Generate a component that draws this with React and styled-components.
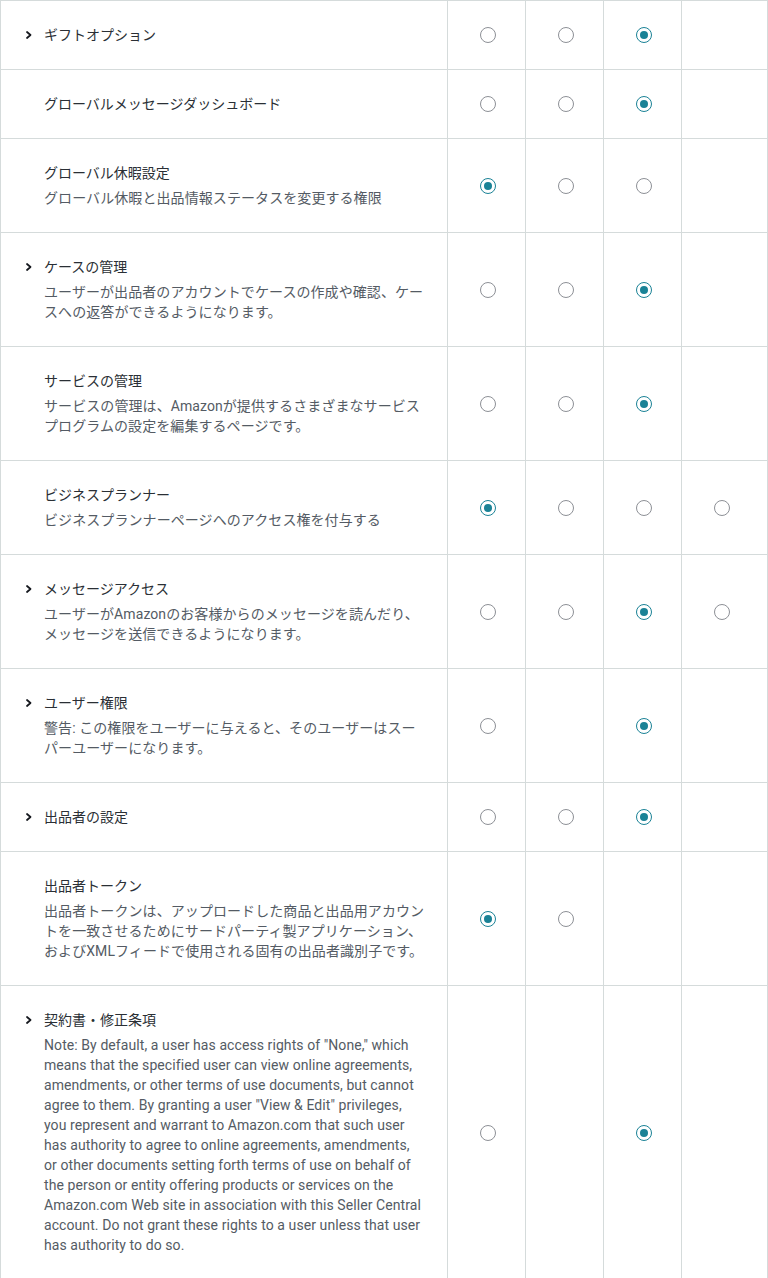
import React from 'react';
import styled, { createGlobalStyle } from 'styled-components';

const GlobalStyle = createGlobalStyle`
  html, body {
    margin: 0;
    padding: 0;
    background: #fff;
  }
  body {
    font-family: Roboto, "Noto Sans CJK JP", sans-serif;
    -webkit-font-smoothing: antialiased;
  }
`;

const Table = styled.div`
  width: 768px;
  box-sizing: border-box;
  border-top: 1px solid #d5dbdb;
  border-left: 1px solid #d5dbdb;
`;

const Row = styled.div`
  display: grid;
  grid-template-columns: 447px 78px 78px 78px 86px;
  border-bottom: 1px solid #d5dbdb;
`;

const LabelCell = styled.div`
  display: flex;
  align-items: flex-start;
  box-sizing: border-box;
  padding: 24px 22px 24px 24px;
  border-right: 1px solid #d5dbdb;
`;

const ChevronSlot = styled.div`
  flex: 0 0 19px;
  height: 20px;
  display: flex;
  align-items: center;
`;

const TextBlock = styled.div`
  flex: 1;
  min-width: 0;
`;

const Title = styled.div`
  font-size: 14px;
  line-height: 20px;
  color: #2a2f35;
`;

const Desc = styled.div`
  margin-top: 5px;
  font-size: 14px;
  line-height: 20px;
  letter-spacing: 0.08px;
  color: #545b64;
  line-break: loose;
`;

const RadioCell = styled.div`
  display: flex;
  align-items: center;
  box-sizing: border-box;
  padding-left: 32px;
  border-right: 1px solid #d5dbdb;
`;

const Radio = styled.span`
  position: relative;
  display: block;
  width: 16px;
  height: 16px;
  box-sizing: border-box;
  border-radius: 50%;
  border: ${p => (p.$checked ? '1.5px solid #1a8296' : '1px solid #8d9096')};
  background: #fff;

  &::after {
    content: '';
    display: ${p => (p.$checked ? 'block' : 'none')};
    position: absolute;
    left: 50%;
    top: 50%;
    width: 8px;
    height: 8px;
    margin: -4px 0 0 -4px;
    border-radius: 50%;
    background: #1a8296;
  }
`;

function Chevron() {
  return (
    <svg width="8" height="10" viewBox="0 0 8 10">
      <path d="M2 2 L5.5 5 L2 8" fill="none" stroke="#16191f" strokeWidth="1.8" strokeLinecap="round" strokeLinejoin="round" />
    </svg>
  );
}

// o = 未選択, x = 選択, - = なし
const rows = [
  { title: 'ギフトオプション', chevron: true, radios: 'oox-' },
  { title: 'グローバルメッセージダッシュボード', radios: 'oox-' },
  { title: 'グローバル休暇設定', desc: 'グローバル休暇と出品情報ステータスを変更する権限', radios: 'xoo-' },
  { title: 'ケースの管理', chevron: true, desc: 'ユーザーが出品者のアカウントでケースの作成や確認、ケースへの返答ができるようになります。', radios: 'oox-' },
  { title: 'サービスの管理', desc: 'サービスの管理は、Amazonが提供するさまざまなサービスプログラムの設定を編集するページです。', radios: 'oox-' },
  { title: 'ビジネスプランナー', desc: 'ビジネスプランナーページへのアクセス権を付与する', radios: 'xooo' },
  { title: 'メッセージアクセス', chevron: true, desc: 'ユーザーがAmazonのお客様からのメッセージを読んだり、メッセージを送信できるようになります。', radios: 'ooxo' },
  { title: 'ユーザー権限', chevron: true, desc: '警告: この権限をユーザーに与えると、そのユーザーはスーパーユーザーになります。', radios: 'o-x-' },
  { title: '出品者の設定', chevron: true, radios: 'oox-' },
  { title: '出品者トークン', desc: '出品者トークンは、アップロードした商品と出品用アカウントを一致させるためにサードパーティ製アプリケーション、およびXMLフィードで使用される固有の出品者識別子です。', radios: 'xo--' },
  {
    title: '契約書・修正条項',
    chevron: true,
    desc: 'Note: By default, a user has access rights of "None," which means that the specified user can view online agreements, amendments, or other terms of use documents, but cannot agree to them. By granting a user "View & Edit" privileges, you represent and warrant to Amazon.com that such user has authority to agree to online agreements, amendments, or other documents setting forth terms of use on behalf of the person or entity offering products or services on the Amazon.com Web site in association with this Seller Central account. Do not grant these rights to a user unless that user has authority to do so.',
    radios: 'o-x-',
  },
];

export default function App() {
  return (
    <>
      <GlobalStyle />
      <Table>
        {rows.map(row => (
          <Row key={row.title}>
            <LabelCell>
              <ChevronSlot>{row.chevron && <Chevron />}</ChevronSlot>
              <TextBlock>
                <Title>{row.title}</Title>
                {row.desc && <Desc>{row.desc}</Desc>}
              </TextBlock>
            </LabelCell>
            {row.radios.split('').map((r, i) => (
              <RadioCell key={i}>
                {r !== '-' && <Radio $checked={r === 'x'} />}
              </RadioCell>
            ))}
          </Row>
        ))}
      </Table>
    </>
  );
}
